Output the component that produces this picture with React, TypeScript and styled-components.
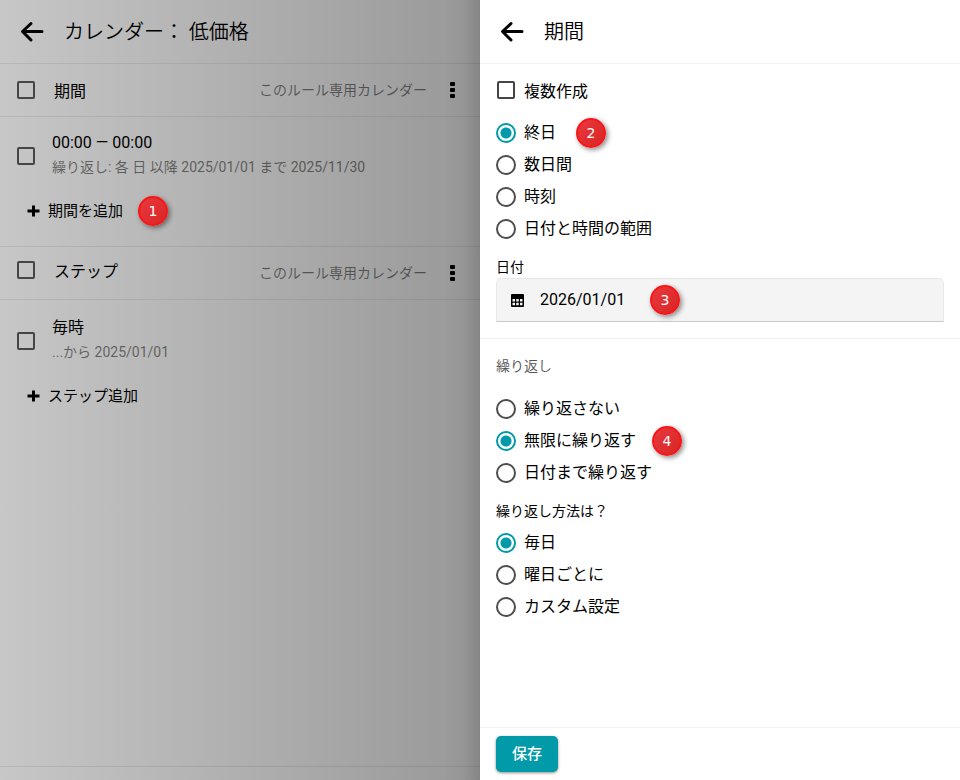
import React, { useState } from "react";
import styled, { createGlobalStyle } from "styled-components";

const GlobalStyle = createGlobalStyle`
  * { box-sizing: border-box; }
  body {
    margin: 0;
    color: #000;
    background: #fff;
    font: 16px/24px Roboto, "Noto Sans CJK JP", sans-serif;
  }
  button, input { font: inherit; color: inherit; }
`;

const Page = styled.div`
  display: grid;
  grid-template-columns: 1fr 1fr;
  min-height: 100vh;
`;

const Backdrop = styled.main`
  display: flex;
  flex-direction: column;
  background:
    linear-gradient(to left, rgba(0, 0, 0, 0.12), rgba(0, 0, 0, 0.03) 16px, rgba(0, 0, 0, 0) 36px),
    linear-gradient(to right, #c7c7c7, #989898);
`;

const Drawer = styled.aside`
  display: flex;
  flex-direction: column;
  background: #fff;
`;

const Header = styled.header<{ $line: string }>`
  display: flex;
  align-items: center;
  gap: 20px;
  height: 64px;
  padding: 0 20px;
  border-bottom: 1px solid ${(p) => p.$line};
`;

const Title = styled.h1`
  margin: 0;
  font-size: 20px;
  line-height: 28px;
  font-weight: 350;
`;

const IconButton = styled.button`
  display: flex;
  padding: 0;
  border: 0;
  background: none;
  cursor: pointer;
`;

const SectionBar = styled.div`
  display: flex;
  align-items: center;
  justify-content: space-between;
  height: 53px;
  padding: 0 16px;
  border-bottom: 1px solid rgba(0, 0, 0, 0.07);
`;

const SectionName = styled.label<{ $lift?: boolean }>`
  display: flex;
  align-items: center;
  gap: 18px;
  padding-bottom: ${(p) => (p.$lift ? 6 : 0)}px;
`;

const CheckText = styled.span`
  padding-top: 3px;
`;

const SectionEnd = styled.div`
  display: flex;
  align-items: center;
  gap: 13px;
`;

const Note = styled.span`
  font-size: 14px;
  line-height: 20px;
  color: rgba(0, 0, 0, 0.5);
`;

const Entries = styled.section<{ $last?: boolean }>`
  padding: ${(p) => (p.$last ? 16 : 14)}px 16px 17px;
  border-bottom: ${(p) => (p.$last ? 0 : 1)}px solid rgba(0, 0, 0, 0.07);
`;

const Entry = styled.label`
  display: flex;
  align-items: center;
  gap: 16px;
  padding-bottom: 16px;
`;

const EntryText = styled.span`
  display: grid;
  gap: 2px;
`;

const AddButton = styled.button`
  display: inline-flex;
  align-items: center;
  gap: 8px;
  height: 36px;
  padding: 0 11px;
  border: 0;
  background: none;
  font-size: 15px;
  cursor: pointer;
`;

const BottomLine = styled.footer`
  height: 14px;
  margin-top: auto;
  border-top: 1px solid rgba(0, 0, 0, 0.07);
`;

const Checkbox = styled.input.attrs({ type: "checkbox" })`
  appearance: none;
  flex: none;
  width: 18px;
  height: 18px;
  margin: 1px;
  border: 2px solid #454545;
  border-radius: 2px;
  &:checked { background: #454545; }
`;

const EntryCheckbox = styled(Checkbox)`
  margin-top: 5px;
`;

const Radio = styled.input.attrs({ type: "radio" })`
  appearance: none;
  flex: none;
  width: 20px;
  height: 20px;
  margin: 0;
  border: 2px solid #4d4d4d;
  border-radius: 50%;
  &:checked {
    border-color: #009aa9;
    background: radial-gradient(circle, #009aa9 0 5px, transparent 6px);
  }
`;

const Option = styled.label`
  display: flex;
  align-items: center;
  gap: 8px;
  min-height: 32px;
`;

const Options = styled.div`
  display: flex;
  flex-direction: column;
`;

const FormSection = styled.section<{ $divided?: boolean }>`
  padding: ${(p) => (p.$divided ? 10 : 17)}px 16px 16px;
  border-bottom: ${(p) => (p.$divided ? 1 : 0)}px solid #f2f2f2;
`;

const Spaced = styled.div`
  margin-top: 11px;
`;

const Caption = styled.label`
  display: block;
  margin-top: 12px;
  font-size: 14px;
  line-height: 20px;
`;

const Question = styled(Caption).attrs({ as: "p" })`
  margin-bottom: 6px;
`;

const Subheading = styled.h2`
  margin: 0 0 17px;
  font-size: 14px;
  line-height: 20px;
  font-weight: 350;
  color: #555;
`;

const DateField = styled.div`
  display: flex;
  align-items: center;
  gap: 16px;
  height: 44px;
  margin-top: 1px;
  padding: 0 14px;
  border: 1px solid #e8e8e8;
  border-bottom-color: #c9c9c9;
  border-radius: 5px 5px 0 0;
  background: #f4f4f4;
`;

const DateValue = styled.div`
  position: relative;
`;

const DateInput = styled.input`
  display: block;
  width: 85px;
  padding: 0;
  border: 0;
  outline: 0;
  background: none;
`;

const Anchor = styled.span`
  position: relative;
`;

const Marker = styled.span<{ $gap: number }>`
  position: absolute;
  top: 50%;
  left: 100%;
  width: 30px;
  height: 30px;
  margin: -15px 0 0 ${(p) => p.$gap}px;
  border: 2px solid #fb1416;
  border-radius: 50%;
  background: linear-gradient(135deg, #e83a3d, #d92427);
  box-shadow: 2px 2px 5px rgba(0, 0, 0, 0.45);
  color: #fff;
  font: 14px/26px "DejaVu Sans", sans-serif;
  text-align: center;
`;

const DrawerFooter = styled.footer`
  margin-top: auto;
  padding: 8px 16px;
  border-top: 1px solid #f2f2f2;
`;

const SaveButton = styled.button`
  display: block;
  height: 36px;
  padding: 0 16px;
  border: 0;
  border-radius: 5px;
  background: #009aa9;
  box-shadow: 0 1px 3px rgba(0, 0, 0, 0.45);
  color: #fff;
  font-size: 15px;
  font-weight: 500;
  cursor: pointer;
`;

const BackIcon = () => (
  <svg width="24" height="24" viewBox="0 0 24 24" fill="none" stroke="#000" strokeWidth="3" strokeLinecap="round" strokeLinejoin="round">
    <path d="M11 3.500 2.500 11.500 11 20M3 11.500H22" />
  </svg>
);

const MoreIcon = () => (
  <svg width="24" height="24" viewBox="0 0 24 24">
    <rect x="10" y="4" width="5" height="4" rx="1" />
    <rect x="10" y="10" width="5" height="4" rx="1" />
    <rect x="10" y="16" width="5" height="4" rx="1" />
  </svg>
);

const PlusIcon = () => (
  <svg width="13" height="12" viewBox="0 0 13 12">
    <path d="M5 .5h3V4.500h4.500v3H8v4H5v-4H.5v-3H5z" />
  </svg>
);

const CalendarIcon = () => (
  <svg width="13" height="13" viewBox="0 0 13 13">
    <path
      fillRule="evenodd"
      d="M1 0h11a1 1 0 0 1 1 1v11a1 1 0 0 1-1 1H1a1 1 0 0 1-1-1V1a1 1 0 0 1 1-1zM1.500 5v2.500h2.500V5zM5.250 5v2.500h2.500V5zM9 5v2.500h2.500V5zM1.500 8.750v2.500h2.500v-2.500zM5.250 8.750v2.500h2.500v-2.500zM9 8.750v2.500h2.500v-2.500z"
    />
  </svg>
);

type Choice = { text: string; marker?: number; gap?: number };

const scopes: Choice[] = [
  { text: "終日", marker: 2, gap: 20 },
  { text: "数日間" },
  { text: "時刻" },
  { text: "日付と時間の範囲" },
];
const repeats: Choice[] = [
  { text: "繰り返さない" },
  { text: "無限に繰り返す", marker: 4, gap: 16 },
  { text: "日付まで繰り返す" },
];
const methods: Choice[] = [{ text: "毎日" }, { text: "曜日ごとに" }, { text: "カスタム設定" }];

function RadioList({ name, label, choices, initial }: { name: string; label: string; choices: Choice[]; initial: number }) {
  const [selected, setSelected] = useState(initial);
  return (
    <Options role="radiogroup" aria-label={label}>
      {choices.map((c, i) => (
        <Option key={c.text}>
          <Radio name={name} checked={selected === i} onChange={() => setSelected(i)} />
          <Anchor>
            {c.text}
            {c.marker && <Marker $gap={c.gap ?? 16}>{c.marker}</Marker>}
          </Anchor>
        </Option>
      ))}
    </Options>
  );
}

function SectionHeader({ name, lift }: { name: string; lift?: boolean }) {
  return (
    <SectionBar>
      <SectionName $lift={lift}>
        <Checkbox />
        <CheckText>{name}</CheckText>
      </SectionName>
      <SectionEnd>
        <Note>このルール専用カレンダー</Note>
        <IconButton aria-label="メニュー">
          <MoreIcon />
        </IconButton>
      </SectionEnd>
    </SectionBar>
  );
}

export default function App() {
  const [date, setDate] = useState("2026/01/01");
  return (
    <>
      <GlobalStyle />
      <Page>
        <Backdrop>
          <Header $line="rgba(0, 0, 0, 0.07)">
            <IconButton aria-label="戻る">
              <BackIcon />
            </IconButton>
            <Title>カレンダー： 低価格</Title>
          </Header>
          <SectionHeader name="期間" />
          <Entries>
            <Entry>
              <EntryCheckbox />
              <EntryText>
                <span>00:00 — 00:00</span>
                <Note>繰り返し: 各 日 以降 2025/01/01 まで 2025/11/30</Note>
              </EntryText>
            </Entry>
            <AddButton>
              <PlusIcon />
              <Anchor>
                期間を追加
                <Marker $gap={15}>1</Marker>
              </Anchor>
            </AddButton>
          </Entries>
          <SectionHeader name="ステップ" lift />
          <Entries $last>
            <Entry>
              <EntryCheckbox />
              <EntryText>
                <span>毎時</span>
                <Note>...から 2025/01/01</Note>
              </EntryText>
            </Entry>
            <AddButton>
              <PlusIcon />
              ステップ追加
            </AddButton>
          </Entries>
          <BottomLine />
        </Backdrop>

        <Drawer>
          <Header $line="#f2f2f2">
            <IconButton aria-label="戻る">
              <BackIcon />
            </IconButton>
            <Title>期間</Title>
          </Header>
          <FormSection $divided>
            <Option>
              <Checkbox />
              <CheckText>複数作成</CheckText>
            </Option>
            <Spaced>
              <RadioList name="scope" label="期間" choices={scopes} initial={0} />
            </Spaced>
            <Caption htmlFor="date">日付</Caption>
            <DateField>
              <CalendarIcon />
              <DateValue>
                <DateInput id="date" type="text" value={date} onChange={(e) => setDate(e.target.value)} />
                <Marker $gap={25}>3</Marker>
              </DateValue>
            </DateField>
          </FormSection>
          <FormSection>
            <Subheading>繰り返し</Subheading>
            <RadioList name="repeat" label="繰り返し" choices={repeats} initial={1} />
            <Question>繰り返し方法は？</Question>
            <RadioList name="method" label="繰り返し方法は？" choices={methods} initial={0} />
          </FormSection>
          <DrawerFooter>
            <SaveButton>保存</SaveButton>
          </DrawerFooter>
        </Drawer>
      </Page>
    </>
  );
}
